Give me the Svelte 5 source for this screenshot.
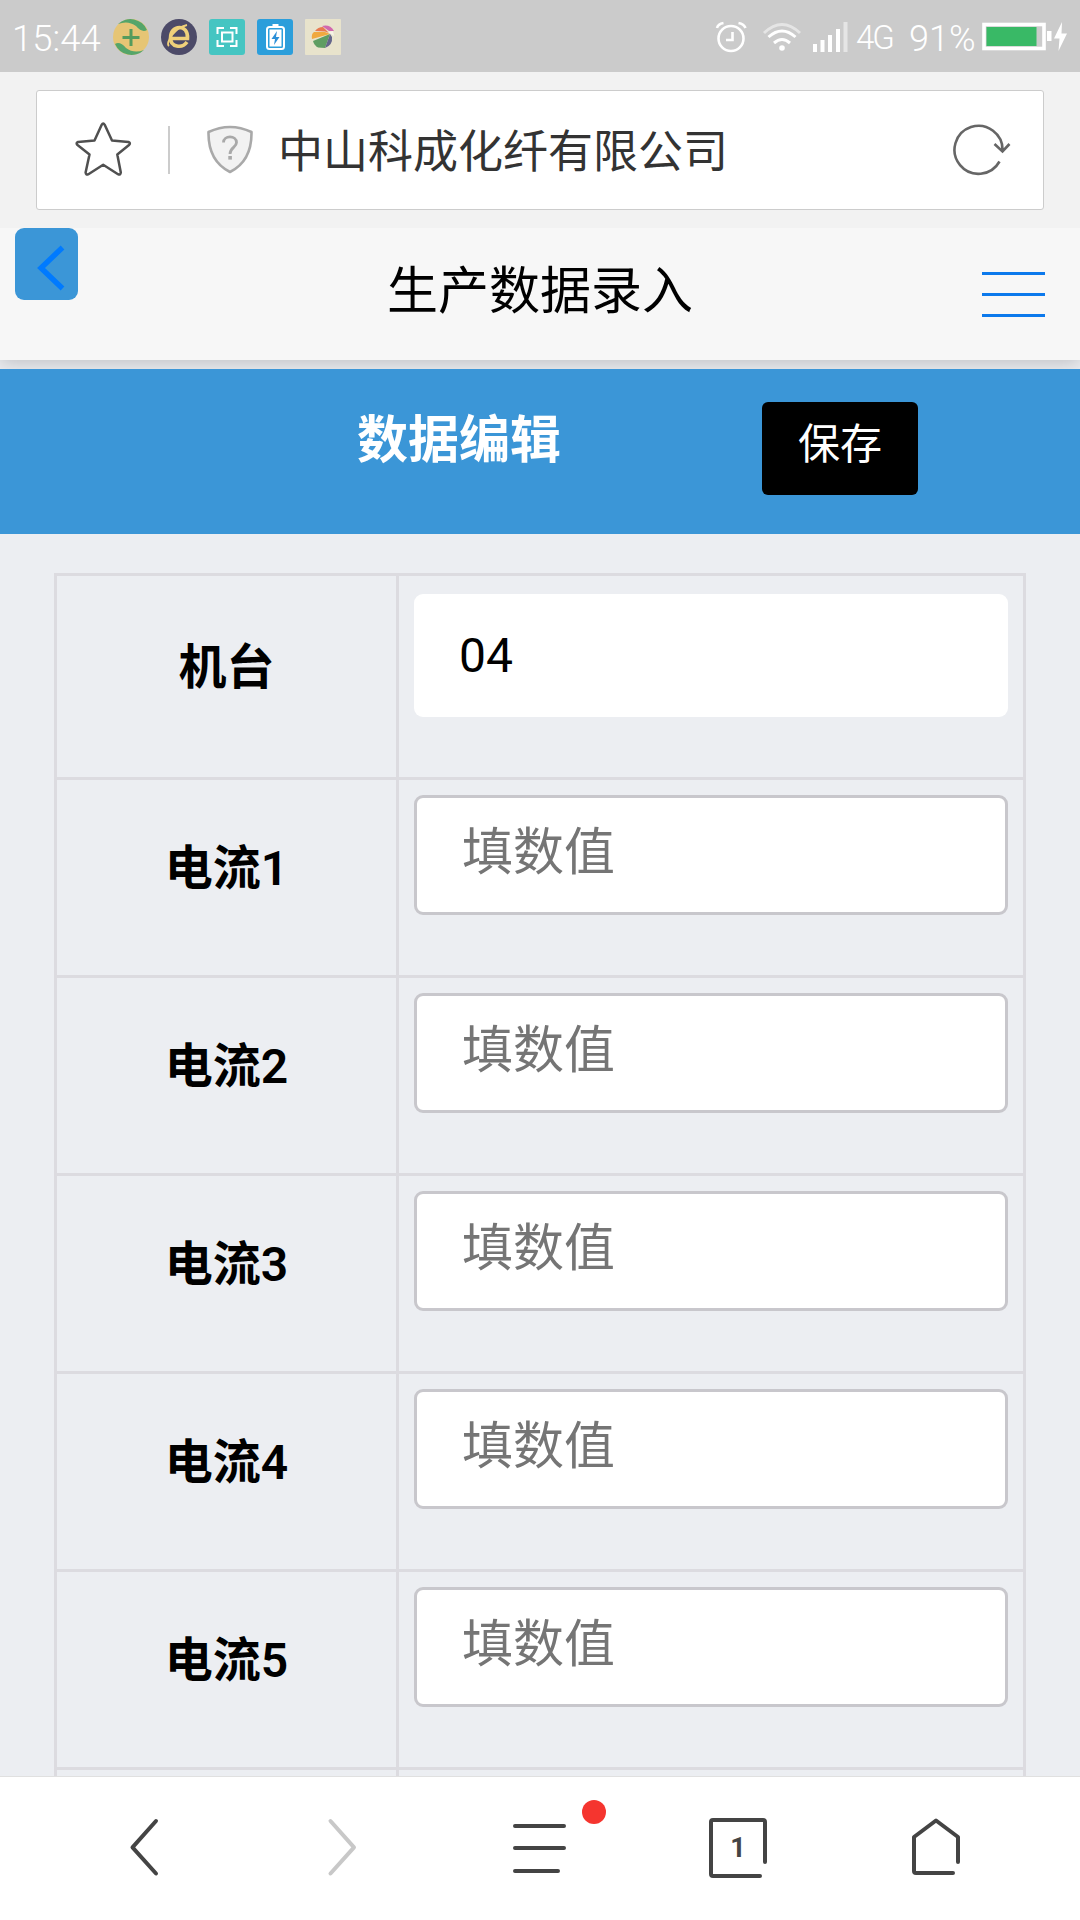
<script>
  const currents = [1, 2, 3, 4, 5];
  let values = $state(['', '', '', '', '']);
  let machine = $state('04');
</script>

<div class="screen">
  <header class="status">
    <span class="time">15:44</span>
    <svg class="apps" width="230" height="36" viewBox="112 19 230 36">
      <circle cx="131" cy="37" r="18" fill="#e6c575" />
      <path d="M118 24A18 18 0 0 1 147 30Q142 33 136 26Q128 20 118 24ZM144 50A18 18 0 0 1 115 44Q120 41 126 48Q134 54 144 50Z" fill="#55a56a" />
      <path d="M131 29V46M122.500 37.500H139.500" stroke="#559b5d" stroke-width="3" />
      <circle cx="179" cy="37" r="18" fill="#4c4a68" />
      <path d="M170 38.500H187.500C188 31 184 27.500 179.500 27.500C174 27.500 170.500 32 170.500 38C170.500 47 182 49 187 42" fill="none" stroke="#efd07a" stroke-width="3.600" />
      <path d="M169 46C165 43 174 28 187 25" fill="none" stroke="#efd07a" stroke-width="1.800" />
      <rect x="209" y="19" width="36" height="36" rx="3" fill="#45c5c2" />
      <g fill="none" stroke="#fff" stroke-width="2">
        <rect x="222" y="32.500" width="10.500" height="9" />
        <path d="M217.500 34V28H224M230 28H236.500V34M236.500 40V46H230M224 46H217.500V40" />
      </g>
      <rect x="257" y="19" width="36" height="36" rx="3" fill="#2b9edb" />
      <rect x="267" y="27" width="17" height="22" rx="2.500" fill="none" stroke="#fff" stroke-width="2" />
      <rect x="269.500" y="29.500" width="12" height="17" fill="#fff" />
      <path d="M272.500 25H278.500" stroke="#fff" stroke-width="2" />
      <path d="M277 31L271.500 39H275L274 45L279.500 37H276Z" fill="#2b8fd8" />
      <rect x="305" y="19" width="36" height="36" rx="1" fill="#e8e3cc" />
      <path d="M312 39Q311 34 314 32H325L330 34Z" fill="#f0a93f" />
      <path d="M315 31Q318 27 323 27L329 33L325 31.500Z" fill="#e8794f" />
      <path d="M322 26Q330 24 334 31L329 31Z" fill="#d268ae" />
      <path d="M330 34L313 41Q314 45 318 47.500L325 48Z" fill="#5f9d62" />
      <path d="M330 34L325 48Q333 45 332 37Z" fill="#64668b" />
      <path d="M328 32L333 31L334 36Z" fill="#f7f4e8" />
    </svg>
    <span class="grow"></span>
    <svg width="134" height="32" viewBox="715 21 134 32" fill="none" stroke="#fff">
      <circle cx="731" cy="38.500" r="12.500" stroke-width="2.600" />
      <path d="M732.500 32V40H726M717 28Q718 24 723.500 23M745.500 28Q744 24 738.500 23" stroke-width="2.600" />
      <path d="M764 33Q782 16 800 33" stroke-width="3" opacity=".5" />
      <path d="M768.500 37Q782 25 795.500 37M774 43Q782 36 790 43" stroke-width="3" />
      <circle cx="782" cy="48" r="2.800" fill="#fff" stroke="none" />
      <path d="M815 52V44M822.500 52V40M830 52V35M838 52V29" stroke-width="4" />
      <path d="M845.500 52V22" stroke-width="4" opacity=".5" />
    </svg>
    <span class="network">4G</span>
    <span class="percent">91%</span>
    <svg width="86" height="30" viewBox="982 23 86 30">
      <rect x="984" y="25.500" width="60" height="24" fill="none" stroke="#fff" stroke-width="3.600" />
      <rect x="986.500" y="28" width="50" height="19" fill="#39b966" />
      <rect x="1047" y="32" width="4.500" height="10" fill="#fff" />
      <path d="M1062 23L1054 39.500H1059.500L1058.500 52L1067 34.500H1061.500Z" fill="#fff" />
    </svg>
  </header>

  <section class="browser">
    <div class="address">
      <svg class="star" width="58" height="56" viewBox="74 122 58 56" fill="none" stroke="#505050" stroke-width="2.500" stroke-linejoin="round">
        <path d="M101.700 124.800Q103.200 122 104.700 124.800L112 140.500L128.500 142Q131 143 129 145L117.300 154.500L120.800 172.500Q120.500 175.500 118 174.200L103.200 164.800L88.400 174.200Q85.900 175.500 85.600 172.500L89.500 154.500L77.500 145Q75.500 143 78 142L94.500 140.500Z" />
      </svg>
      <span class="rule"></span>
      <svg class="shield" width="48" height="50" viewBox="206 125 48 50">
        <path d="M208.500 132Q230 122 251.500 132Q252 161 230 172Q208 161 208.500 132Z" fill="#f2f2f2" stroke="#a9a9a9" stroke-width="2.600" stroke-linejoin="round" />
        <path d="M223.500 142.500C223.500 135 236.500 135 236.500 142.500C236.500 147.500 230 147.500 230 154" fill="none" stroke="#a9a9a9" stroke-width="2.800" />
        <rect x="228.300" y="156" width="3.600" height="3.600" fill="#a9a9a9" />
      </svg>
      <span class="site">中山科成化纤有限公司</span>
      <span class="grow"></span>
      <svg width="60" height="54" viewBox="951 123 60 54" fill="none" stroke="#666" stroke-width="2.600">
        <path d="M998.500 161.500A24 24 0 1 1 1001.500 151M993.500 144L1001.500 151.500L1008.500 144" />
      </svg>
    </div>
  </section>

  <section class="titlebar">
    <button class="back" aria-label="返回">
      <svg width="63" height="72" viewBox="15 228 63 72"><path d="M62.500 247.500L41 268L62.500 288.500" fill="none" stroke="#007aff" stroke-width="5.400" /></svg>
    </button>
    <h1>生产数据录入</h1>
    <button class="burger" aria-label="菜单"><i></i><i></i><i></i></button>
  </section>

  <section class="editbar">
    <h2>数据编辑</h2>
    <button class="save">保存</button>
  </section>

  <main>
    <div class="table">
      <div class="row first">
        <div class="label">机台</div>
        <div class="cell"><input class="plain" bind:value={machine} /></div>
      </div>
      {#each currents as n, i}
        <div class="row">
          <div class="label">电流<b>{n}</b></div>
          <div class="cell"><input placeholder="填数值" bind:value={values[i]} /></div>
        </div>
      {/each}
      <div class="row">
        <div class="label"></div>
        <div class="cell"></div>
      </div>
    </div>
  </main>

  <nav>
    <span class="tab"><svg width="34" height="60" viewBox="127 1817 34 60"><path d="M156 1821L132.500 1847.300L156 1873.500" stroke="#444" /></svg></span>
    <span class="tab"><svg width="34" height="60" viewBox="325 1817 34 60"><path d="M330.500 1821L354 1847.300L330.500 1873.500" stroke="#c8c8c8" /></svg></span>
    <span class="tab"><svg width="56" height="60" viewBox="512 1817 56 60"><path d="M515 1826H564M515 1848H564M515 1871H558" stroke="#444" /></svg><em></em></span>
    <span class="tab"><svg width="60" height="62" viewBox="708 1817 60 62"><path d="M765 1862V1822Q765 1820 763 1820H713Q711 1820 711 1822V1874Q711 1876 713 1876H760" stroke="#444" /></svg><strong>1</strong></span>
    <span class="tab"><svg width="52" height="60" viewBox="910 1817 52 60"><path d="M958 1862V1837L936 1820.500L914 1837V1871Q914 1873 916 1873H953" stroke="#444" /></svg></span>
  </nav>
</div>

<style>
  :global(body) { margin: 0; }
  .screen {
    width: 1080px;
    height: 1920px;
    display: flex;
    flex-direction: column;
    overflow: hidden;
    background: #eceef2;
    font-family: "Noto Sans CJK SC", sans-serif;
    color: #000;
  }
  svg { display: block; flex: none; }
  .grow { flex: 1; }
  button { border: 0; padding: 0; font: inherit; }
  h1, h2 { margin: 0; white-space: nowrap; }

  .status {
    flex: none;
    height: 72px;
    box-sizing: border-box;
    padding: 2px 12px 0 12px;
    display: flex;
    align-items: center;
    background: #cbcbcb;
    color: #fff;
    font-family: Roboto, sans-serif;
  }
  .time { width: 100px; font-size: 36.500px; font-weight: 350; line-height: 72px; padding-top: 4px; }
  .network { margin-left: 7px; width: 38px; font-size: 33px; letter-spacing: -2px; font-weight: 350; }
  .percent { margin-left: 15px; width: 73px; font-size: 36px; font-weight: 350; padding-top: 4px; }

  .browser {
    flex: none;
    height: 156px;
    box-sizing: border-box;
    padding: 18px 36px;
    background: #f2f2f2;
  }
  .address {
    height: 120px;
    box-sizing: border-box;
    border: 1px solid #ccc;
    border-radius: 3px;
    background: #fff;
    padding: 0 31px 0 37px;
    display: flex;
    align-items: center;
  }
  .rule { width: 2px; height: 48px; margin: 0 36px 0 36px; background: #ccc; }
  .site { margin-left: 24px; font-size: 45px; line-height: 60px; color: #333; padding-bottom: 3px; }

  .titlebar {
    flex: none;
    height: 132px;
    display: grid;
    grid-template-columns: 93px 1fr 93px;
    padding: 0 15px;
    background: #f7f7f7;
    box-shadow: 0 3px 18px rgba(0, 0, 0, .2);
    z-index: 1;
    clip-path: inset(0 0 -9px 0);
  }
  .back { width: 63px; height: 72px; border-radius: 9px; background: #3b96d7; }
  h1 { text-align: center; font-size: 51px; font-weight: 400; line-height: 118px; }
  .burger {
    justify-self: end;
    width: 63px;
    height: 45px;
    margin: 44px 20px 0 0;
    display: flex;
    flex-direction: column;
    justify-content: space-between;
    background: none;
  }
  .burger i { height: 3px; width: 63px; background: #0c79ec; }

  .editbar {
    flex: none;
    height: 165px;
    margin-top: 9px;
    display: flex;
    align-items: flex-start;
    background: #3b96d7;
  }
  h2 { margin-left: 357px; width: 405px; color: #fff; font-size: 51px; font-weight: 700; line-height: 135px; }
  .save {
    width: 156px;
    height: 93px;
    margin-top: 33px;
    border-radius: 6px;
    background: #000;
    color: #fff;
    font-size: 42px;
    line-height: 78px;
    padding-bottom: 15px;
  }

  main { flex: 1; min-height: 0; overflow: hidden; padding: 39px 54px 0; }
  .table { border: 3px solid #dcdbe0; }
  .row { height: 198px; box-sizing: border-box; display: grid; grid-template-columns: 342px 1fr; border-bottom: 3px solid #dcdbe0; }
  .first { height: 204px; }
  .label {
    padding-top: 54px;
    border-right: 3px solid #dcdbe0;
    text-align: center;
    font-size: 48px;
    font-weight: 700;
    line-height: 60px;
  }
  .first .label { padding-top: 57px; }
  .label b { font-family: Roboto, sans-serif; font-weight: 600; line-height: 1; }
  .cell { padding: 15px 15px 0; }
  input {
    display: block;
    width: 594px;
    height: 120px;
    box-sizing: border-box;
    border: 3px solid #c8c7cc;
    border-radius: 9px;
    background: #fff;
    padding: 0 45px 14px;
    font: 51px "Noto Sans CJK SC", sans-serif;
    outline: 0;
  }
  input::placeholder { color: #757575; opacity: 1; }
  .plain {
    height: 123px;
    margin-top: 3px;
    border: 0;
    padding: 0 45px;
    font: 48px Roboto, sans-serif;
  }

  nav {
    flex: none;
    height: 144px;
    box-sizing: border-box;
    border-top: 1px solid #e0e0e0;
    padding: 0 45px;
    background: #fff;
    display: grid;
    grid-template-columns: repeat(5, 1fr);
  }
  .tab { position: relative; display: flex; justify-content: center; padding-top: 40px; }
  .tab path { fill: none; stroke-width: 4; stroke-linecap: round; stroke-linejoin: round; }
  .tab em { position: absolute; left: 141px; top: 23px; width: 24px; height: 24px; border-radius: 50%; background: #f5352f; }
  .tab strong { position: absolute; left: 0; right: 0; top: 56px; text-align: center; font-family: Roboto, sans-serif; font-size: 27px; line-height: 30px; color: #444; }
</style>
